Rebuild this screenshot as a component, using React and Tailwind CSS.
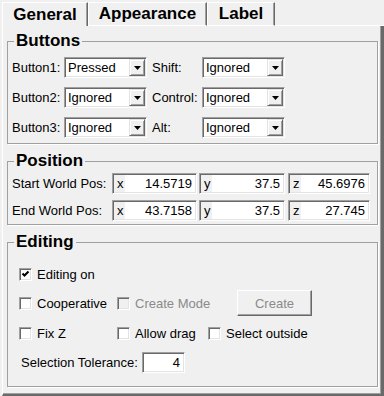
import React from "react";

const sunken =
  "border border-t-[#a0a0a0] border-l-[#a0a0a0] border-r-white border-b-white shadow-[inset_1px_1px_0_#696969,inset_-1px_-1px_0_#e3e3e3]";

function Tab({ active, w, children }) {
  return (
    <div
      className={`h-[24px] flex items-center justify-center font-bold text-[17px] leading-[20px] border-l border-t border-white border-r border-r-[#696969] shadow-[inset_-1px_0_0_#a0a0a0] ${
        active ? "" : "border-b border-b-white"
      } ${w}`}
    >
      {children}
    </div>
  );
}

function Select({ value }) {
  return (
    <div className={`flex w-[83px] h-[21px] bg-white ${sunken}`}>
      <div className="flex-1 flex items-center pl-[3px] leading-none">{value}</div>
      <div className="w-[16px] h-[17px] mt-[1px] mr-[1px] bg-[#f0f0f0] border border-t-[#e3e3e3] border-l-[#e3e3e3] border-r-[#696969] border-b-[#696969] shadow-[inset_1px_1px_0_#fff,inset_-1px_-1px_0_#a0a0a0] flex items-center justify-center">
        <svg width="7" height="4" viewBox="0 0 7 4">
          <polygon points="0,0 7,0 3.5,4" fill="black" />
        </svg>
      </div>
    </div>
  );
}

function Coord({ prefix, value, w }) {
  return (
    <div className={`flex h-[21px] bg-white ${sunken} ${w}`}>
      <div className="w-[11px] mt-[1px] mb-[1px] ml-[1px] bg-[#f0f0f0] flex items-center pl-[3px] leading-none">
        {prefix}
      </div>
      <div className="flex-1 flex items-center justify-end pr-[4px] leading-none">{value}</div>
    </div>
  );
}

function Check({ checked, disabled, label, w }) {
  return (
    <div className={`flex items-center ${w}`}>
      <div
        className={`w-[13px] h-[13px] flex items-center justify-center ${sunken} ${
          disabled ? "bg-[#f0f0f0]" : "bg-white"
        }`}
      >
        {checked && (
          <svg width="9" height="9" viewBox="0 0 9 9">
            <path d="M1.5 3.5 L3.5 5.5 L7.5 1.5" fill="none" stroke="black" strokeWidth="2" />
          </svg>
        )}
      </div>
      <span className={`ml-[5px] leading-none ${disabled ? "text-[#8a8a8a]" : ""}`}>{label}</span>
    </div>
  );
}

function Group({ title, className, children }) {
  return (
    <fieldset
      className={`w-[371px] ml-[4px] min-w-0 p-0 m-0 border border-[#a0a0a0] shadow-[1px_1px_0_#fff] ${className}`}
    >
      <legend className="ml-[6px] px-[2px] font-bold text-[17px] leading-[20px]">{title}</legend>
      {children}
    </fieldset>
  );
}

export default function App() {
  return (
    <div className="w-[384px] h-[396px] bg-[#f0f0f0] overflow-hidden text-black font-['Liberation_Sans',Arial,sans-serif] text-[13px]">
      <div className="flex h-[26px] pt-[2px]">
        <div className="w-[2px]" />
        <Tab active w="w-[86px]">General</Tab>
        <Tab w="w-[119px]">Appearance</Tab>
        <Tab w="w-[68px]">Label</Tab>
        <div className="flex-1 border-b border-white" />
      </div>
      <div className="h-[370px] ml-[2px] border-l border-white border-r-[3px] border-b-2 border-r-[#696969] border-b-[#696969] shadow-[inset_-1px_-1px_0_#a0a0a0] flex flex-col">
        <Group title="Buttons" className="mt-[5px]">
          <div className="flex flex-col gap-[9px] pt-[6px] pb-[5px] pl-[4px]">
            {[
              ["Button1:", "Pressed", "Shift:", "Ignored"],
              ["Button2:", "Ignored", "Control:", "Ignored"],
              ["Button3:", "Ignored", "Alt:", "Ignored"],
            ].map(([l1, v1, l2, v2]) => (
              <div key={l1} className="flex items-center h-[21px]">
                <span className="w-[52px]">{l1}</span>
                <Select value={v1} />
                <span className="w-[50px] ml-[5px]">{l2}</span>
                <Select value={v2} />
              </div>
            ))}
          </div>
        </Group>
        <Group title="Position" className="mt-[7px]">
          <div className="flex flex-col gap-[6px] pt-[2px] pb-[3px] pl-[4px]">
            {[
              ["Start World Pos:", "14.5719", "37.5", "45.6976"],
              ["End World Pos:", "43.7158", "37.5", "27.745"],
            ].map(([l, x, y, z]) => (
              <div key={l} className="flex items-center h-[21px]">
                <span className="w-[100px]">{l}</span>
                <Coord prefix="x" value={x} w="w-[85px]" />
                <div className="w-[2px]" />
                <Coord prefix="y" value={y} w="w-[86px]" />
                <div className="w-[3px]" />
                <Coord prefix="z" value={z} w="w-[82px]" />
              </div>
            ))}
          </div>
        </Group>
        <Group title="Editing" className="mt-[7px]">
          <div className="flex flex-col pt-[12px] pb-[13px] pl-[11px]">
            <div className="flex items-center h-[20px]">
              <Check checked label="Editing on" />
            </div>
            <div className="flex items-center h-[26px] mt-[6px]">
              <Check label="Cooperative" w="w-[98px]" />
              <Check disabled label="Create Mode" w="w-[120px]" />
              <button className="w-[75px] h-[26px] bg-[#f0f0f0] text-[#8a8a8a] border border-t-white border-l-white border-r-[#696969] border-b-[#696969] shadow-[inset_-1px_-1px_0_#a0a0a0] leading-none">
                Create
              </button>
            </div>
            <div className="flex items-center h-[20px] mt-[7px]">
              <Check label="Fix Z" w="w-[98px]" />
              <Check label="Allow drag" w="w-[91px]" />
              <Check label="Select outside" />
            </div>
            <div className="flex items-center h-[21px] mt-[9px] pl-[2px]">
              <span className="w-[121px]">Selection Tolerance:</span>
              <div className={`w-[43px] h-[21px] bg-white flex items-center justify-end pr-[4px] leading-none ${sunken}`}>
                4
              </div>
            </div>
          </div>
        </Group>
      </div>
    </div>
  );
}
